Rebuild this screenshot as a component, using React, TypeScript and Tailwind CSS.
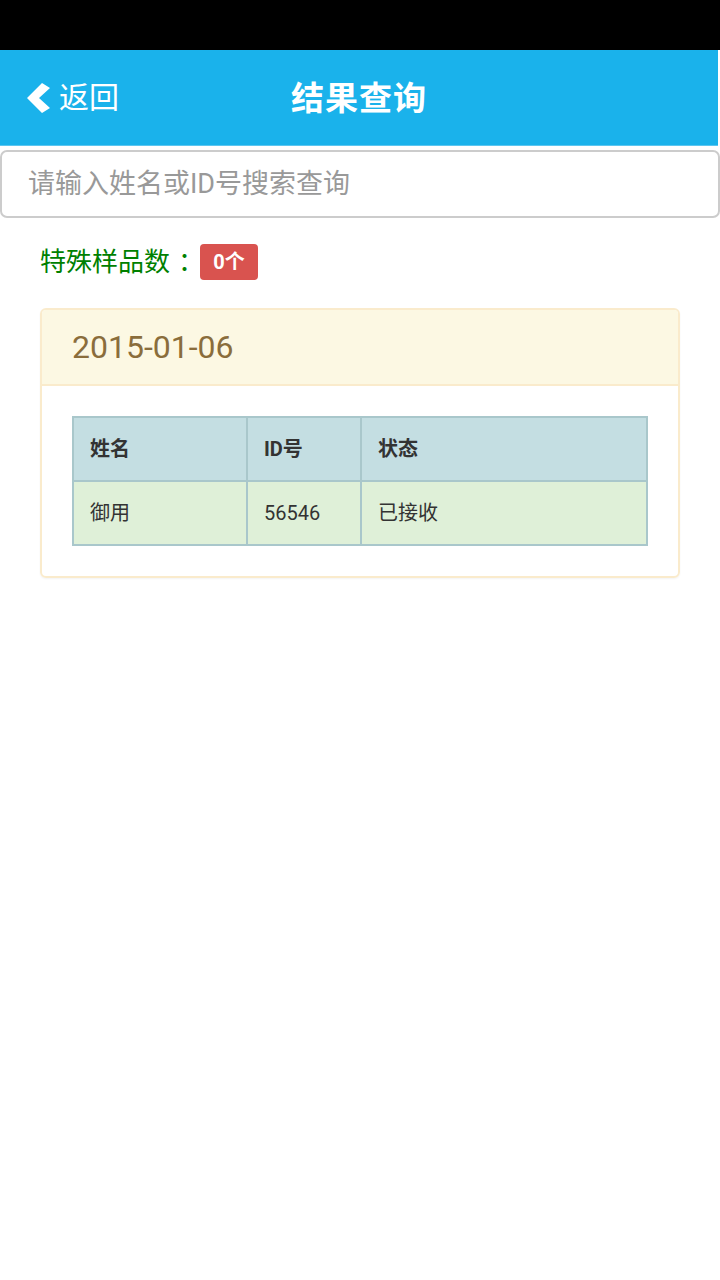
import React from "react";

export default function App() {
  const font = { fontFamily: "Roboto, 'Noto Sans CJK SC', sans-serif" };
  return (
    <div className="w-[720px] h-[1280px] bg-white flex flex-col" style={font}>
      <div className="h-[50px] bg-black shrink-0" />
      <div className="h-[96px] bg-[#1ab2eb] border-b border-[#5cc6f0] mr-[2px] relative flex items-center justify-center shrink-0">
        <div className="absolute left-[26px] top-0 h-full flex items-center gap-[9px] text-white">
          <svg width="24" height="32" viewBox="0 0 24 32">
            <polygon points="16,1 24,6 13,16 24,26 16,31 1,16" fill="#ffffff" />
          </svg>
          <span className="text-[30px] leading-none">返回</span>
        </div>
        <span className="text-white text-[33px] font-bold leading-none tracking-[1px] pt-[2px]">结果查询</span>
      </div>
      <div className="mt-[4px] h-[68px] mx-0 border-2 border-[#cccccc] rounded-[7px] flex items-center px-[26px] shrink-0">
        <span className="text-[#999999] text-[27px] leading-none">请输入姓名或ID号搜索查询</span>
      </div>
      <div className="mt-[26px] ml-[40px] flex items-center h-[36px]">
        <span className="text-[#008000] text-[26px] leading-none">特殊样品数</span>
        <span className="text-[#008000] text-[26px] leading-none ml-[8px] w-[20px]">：</span>
        <span className="ml-[2px] bg-[#d9534f] text-white font-bold text-[20px] leading-none rounded-[4px] h-[36px] w-[58px] flex items-center justify-center">0个</span>
      </div>
      <div className="mt-[28px] mx-[40px] border-2 border-[#faebcc] rounded-[6px] overflow-hidden shadow-[0_1px_2px_rgba(0,0,0,0.05)]">
        <div className="h-[76px] bg-[#fcf8e3] border-b-2 border-[#faebcc] flex items-center px-[30px]">
          <span className="text-[#8a6d3b] text-[32px] leading-none">2015-01-06</span>
        </div>
        <div className="px-[30px] pt-[30px] pb-[30px]">
          <table className="w-full border-collapse border-2 border-[#a9c7cb] text-[20px] text-[#333333]">
            <tbody>
              <tr className="h-[64px] bg-[#c4dee2] font-bold">
                <td className="border-2 border-[#a9c7cb] pl-[16px] w-[174px]">姓名</td>
                <td className="border-2 border-[#a9c7cb] pl-[16px] w-[114px]">ID号</td>
                <td className="border-2 border-[#a9c7cb] pl-[16px]">状态</td>
              </tr>
              <tr className="h-[64px] bg-[#dff0d8]">
                <td className="border-2 border-[#a9c7cb] pl-[16px]">御用</td>
                <td className="border-2 border-[#a9c7cb] pl-[16px]">56546</td>
                <td className="border-2 border-[#a9c7cb] pl-[16px]">已接收</td>
              </tr>
            </tbody>
          </table>
        </div>
      </div>
    </div>
  );
}
